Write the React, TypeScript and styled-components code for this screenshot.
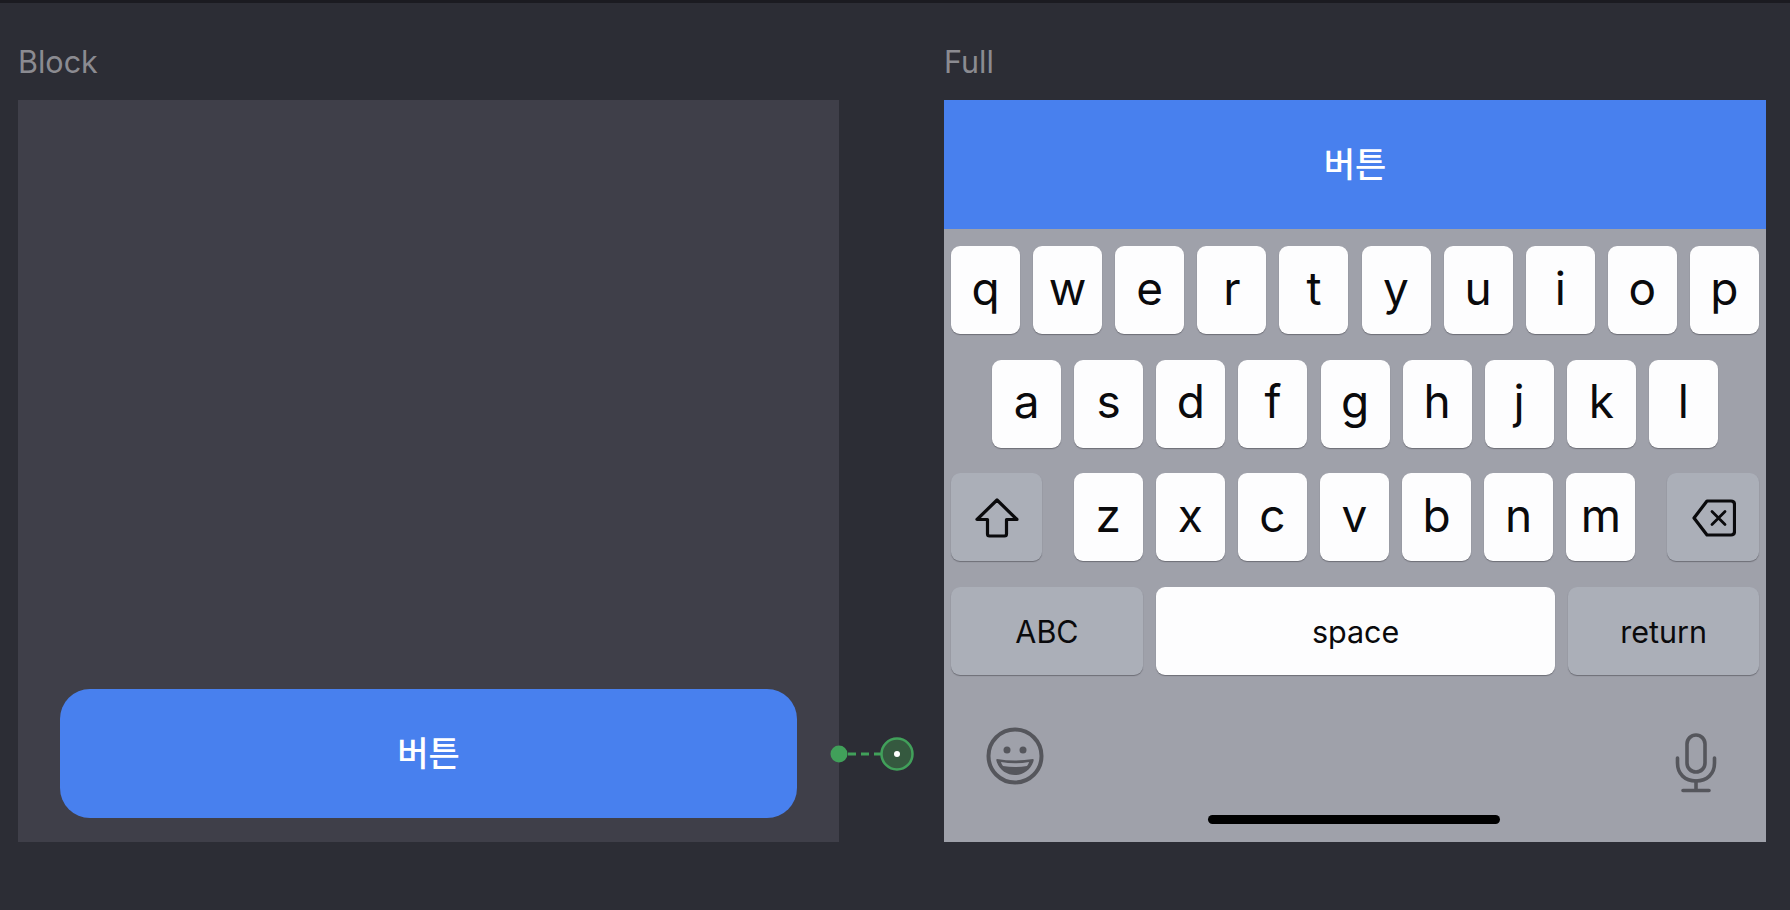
import styled, { createGlobalStyle } from 'styled-components';

const colors = {
  page: '#2c2d35',
  topBar: '#1b1b21',
  panel: '#3f3f49',
  blue: '#4880ee',
  board: '#9fa1aa',
  key: '#fdfdfe',
  specialKey: '#abafb8',
  icon: '#55565c',
  green: '#41a05a',
};

const GlobalStyle = createGlobalStyle`
  html, body {
    margin: 0;
    padding: 0;
    background: ${colors.page};
    font-family: 'Inter', 'Noto Sans CJK KR', sans-serif;
  }
`;

const Page = styled.div`
  width: 1790px;
  height: 910px;
  box-sizing: border-box;
  border-top: 3px solid ${colors.topBar};
  overflow: hidden;
`;

const Stage = styled.div`
  position: relative;
  display: grid;
  grid-template-columns: 821px 822px;
  column-gap: 105px;
  padding: 41px 24px 0 18px;
`;

const Column = styled.section`
  display: flex;
  flex-direction: column;
`;

const Label = styled.div`
  height: 35px;
  margin-bottom: 21px;
  color: #8b8b91;
  font-size: 30.5px;
  line-height: 35px;
`;

const Frame = styled.div`
  display: flex;
  flex-direction: column;
  height: 742px;
  background: ${colors.panel};
`;

const BlockFrame = styled(Frame)`
  justify-content: flex-end;
  padding: 0 42px 24px 42px;
  box-sizing: border-box;
`;

const CtaButton = styled.button<{ $full?: boolean }>`
  flex: none;
  height: 129px;
  width: 100%;
  border: 0;
  padding: 0 0 5px;
  border-radius: ${p => (p.$full ? '0' : '30px')};
  background: ${colors.blue};
  color: #fff;
  font-family: 'Noto Sans CJK KR', sans-serif;
  font-size: 34px;
  font-weight: 500;
`;

const Keyboard = styled.div`
  flex: 1;
  display: flex;
  flex-direction: column;
  box-sizing: border-box;
  padding: 17px 7px 0;
  background: ${colors.board};
`;

const KeyRow = styled.div<{ $split?: boolean }>`
  display: flex;
  justify-content: ${p => (p.$split ? 'space-between' : 'center')};
  gap: 13.1px;
  height: 88px;
  margin-bottom: 25.7px;
`;

const LetterGroup = styled.div`
  display: flex;
  gap: 13.1px;
`;

const Key = styled.div<{ $special?: boolean; $width?: number; $small?: boolean }>`
  flex: none;
  display: flex;
  align-items: center;
  justify-content: center;
  box-sizing: border-box;
  width: ${p => p.$width ?? 69}px;
  height: 88px;
  padding-top: ${p => (p.$small ? 2 : 0)}px;
  padding-bottom: ${p => (p.$small ? 0 : 5)}px;
  border-radius: 9px;
  background: ${p => (p.$special ? colors.specialKey : colors.key)};
  box-shadow: 0 1px 1px rgba(60, 60, 67, 0.5);
  color: #0a0a0c;
  font-size: ${p => (p.$small ? 30.5 : 46)}px;
  line-height: 1;
`;

const IconKey = styled(Key)`
  padding: 2px 0 0 1px;
`;

const SystemRow = styled.div`
  display: flex;
  justify-content: space-between;
  align-items: flex-start;
  padding: 26px 42px 0 35px;
  height: 85px;
`;

const MicSlot = styled.div`
  margin-top: 6px;
`;

const HomeBar = styled.div`
  align-self: center;
  width: 292px;
  height: 9px;
  margin: 3px 2px 0 0;
  border-radius: 5px;
  background: #000;
`;

const Connector = styled.svg`
  position: absolute;
  left: 828px;
  top: 731px;
`;

const topRow = 'qwertyuiop'.split('');
const midRow = 'asdfghjkl'.split('');
const lowRow = 'zxcvbnm'.split('');

function ShiftIcon() {
  return (
    <svg width="44" height="40" viewBox="0 0 44 40" fill="none" stroke="#0a0a0c" strokeWidth="3.2" strokeLinejoin="round">
      <path d="M22 2 L2 21.5 H12.5 V36 Q12.5 38 14.5 38 H29.5 Q31.5 38 31.5 36 V21.5 H42 Z" />
    </svg>
  );
}

function DeleteIcon() {
  return (
    <svg width="44" height="38" viewBox="0 0 44 38" fill="none" stroke="#0a0a0c" strokeWidth="3.2" strokeLinejoin="round" strokeLinecap="round">
      <path d="M15 2 H39 Q42.500 2 42.500 5.500 V32.500 Q42.500 36 39 36 H15 L2 19 Z" />
      <path d="M20 12.500 L33 25.500 M33 12.500 L20 25.500" strokeWidth="2.800" />
    </svg>
  );
}

function EmojiIcon() {
  return (
    <svg width="58" height="58" viewBox="-29 -29 58 58" fill="none">
      <circle r="26.500" stroke={colors.icon} strokeWidth="4" />
      <circle cx="-8" cy="-6" r="3.500" fill={colors.icon} />
      <circle cx="8" cy="-6" r="3.500" fill={colors.icon} />
      <path d="M-18 3 Q0 6 18 3 Q19 3 18.500 5 C16 14 8 19 0 19 C-8 19 -16 14 -18.500 5 Q-19 3 -18 3 Z" fill={colors.icon} />
      <path d="M-14 6 Q0 8.500 14 6 Q13.500 8.500 12 10 Q0 12 -12 10 Q-13.500 8.500 -14 6 Z" fill={colors.board} />
    </svg>
  );
}

function MicIcon() {
  return (
    <svg width="42" height="60" viewBox="0 0 42 60" fill="none" stroke={colors.icon} strokeWidth="3.600" strokeLinecap="round">
      <rect x="12" y="2" width="18" height="37" rx="9" />
      <path d="M2.500 25 V30 C2.500 41 10 48 21 48 C32 48 39.500 41 39.500 30 V25" />
      <path d="M21 48 V57 M8 57.500 H34" />
    </svg>
  );
}

export default function App() {
  return (
    <Page>
      <GlobalStyle />
      <Stage>
        <Column>
          <Label>Block</Label>
          <BlockFrame>
            <CtaButton>버튼</CtaButton>
          </BlockFrame>
        </Column>

        <Column>
          <Label>Full</Label>
          <Frame>
            <CtaButton $full>버튼</CtaButton>
            <Keyboard>
              <KeyRow>
                {topRow.map(k => <Key key={k}>{k}</Key>)}
              </KeyRow>
              <KeyRow>
                {midRow.map(k => <Key key={k}>{k}</Key>)}
              </KeyRow>
              <KeyRow $split>
                <IconKey $special $width={91}><ShiftIcon /></IconKey>
                <LetterGroup>
                  {lowRow.map(k => <Key key={k}>{k}</Key>)}
                </LetterGroup>
                <IconKey $special $width={92}><DeleteIcon /></IconKey>
              </KeyRow>
              <KeyRow $split>
                <Key $special $small $width={192}>ABC</Key>
                <Key $small $width={399}>space</Key>
                <Key $special $small $width={191}>return</Key>
              </KeyRow>
              <SystemRow>
                <EmojiIcon />
                <MicSlot><MicIcon /></MicSlot>
              </SystemRow>
              <HomeBar />
            </Keyboard>
          </Frame>
        </Column>

        <Connector width="90" height="40" viewBox="0 0 90 40" fill="none">
          <circle cx="11" cy="20" r="8.500" fill={colors.green} />
          <path d="M20 20 H54" stroke={colors.green} strokeWidth="3" strokeDasharray="8 5" />
          <circle cx="69" cy="20" r="15.500" fill="#35593f" stroke={colors.green} strokeWidth="2.500" />
          <circle cx="69" cy="20" r="3" fill="#fff" />
        </Connector>
      </Stage>
    </Page>
  );
}
